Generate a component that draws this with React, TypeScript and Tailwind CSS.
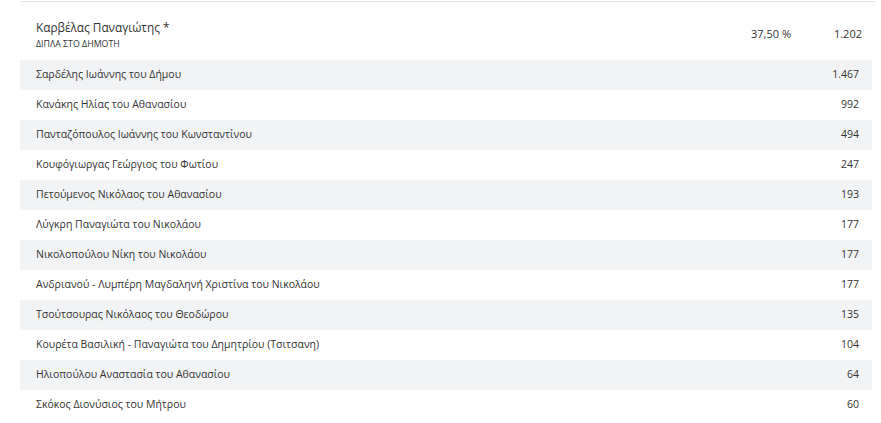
const rows: [string, string][] = [
  ['Σαρδέλης Ιωάννης του Δήμου', '1.467'],
  ['Κανάκης Ηλίας του Αθανασίου', '992'],
  ['Πανταζόπουλος Ιωάννης του Κωνσταντίνου', '494'],
  ['Κουφόγιωργας Γεώργιος του Φωτίου', '247'],
  ['Πετούμενος Νικόλαος του Αθανασίου', '193'],
  ['Λύγκρη Παναγιώτα του Νικολάου', '177'],
  ['Νικολοπούλου Νίκη του Νικολάου', '177'],
  ['Ανδριανού - Λυμπέρη Μαγδαληνή Χριστίνα του Νικολάου', '177'],
  ['Τσούτσουρας Νικόλαος του Θεοδώρου', '135'],
  ['Κουρέτα Βασιλική - Παναγιώτα του Δημητρίου (Τσιτσανη)', '104'],
  ['Ηλιοπούλου Αναστασία του Αθανασίου', '64'],
  ['Σκόκος Διονύσιος του Μήτρου', '60'],
];

export default function App() {
  return (
    <div className="w-[881px] h-[423px] bg-white overflow-hidden pl-5 pr-[5px] pt-px text-[#333] font-['Open_Sans',sans-serif]">
      <div className="border-t border-[#e4e6e9]">
        <div className="h-[58px] flex items-center pl-4 pr-[14px] pt-[6px]">
          <div className="flex-1">
            <div className="text-[11.8px] leading-4">Καρβέλας Παναγιώτης *</div>
            <div className="text-[8.8px] leading-3 mt-[3px] uppercase">ΔΙΠΛΑ ΣΤΟ ΔΗΜΟΤΗ</div>
          </div>
          <div className="text-[11px] w-[60px] text-right">37,50 %</div>
          <div className="text-[11px] w-[71px] text-right">1.202</div>
        </div>
        <div className="pr-[4px]">
          {rows.map(([name, votes], i) => (
            <div
              key={i}
              className={`h-[30px] flex items-center pl-4 pr-[13px] text-[10.5px] ${i % 2 === 0 ? 'bg-[#f2f3f5]' : 'bg-white'}`}
            >
              <div className="flex-1">{name}</div>
              <div>{votes}</div>
            </div>
          ))}
        </div>
      </div>
    </div>
  );
}
